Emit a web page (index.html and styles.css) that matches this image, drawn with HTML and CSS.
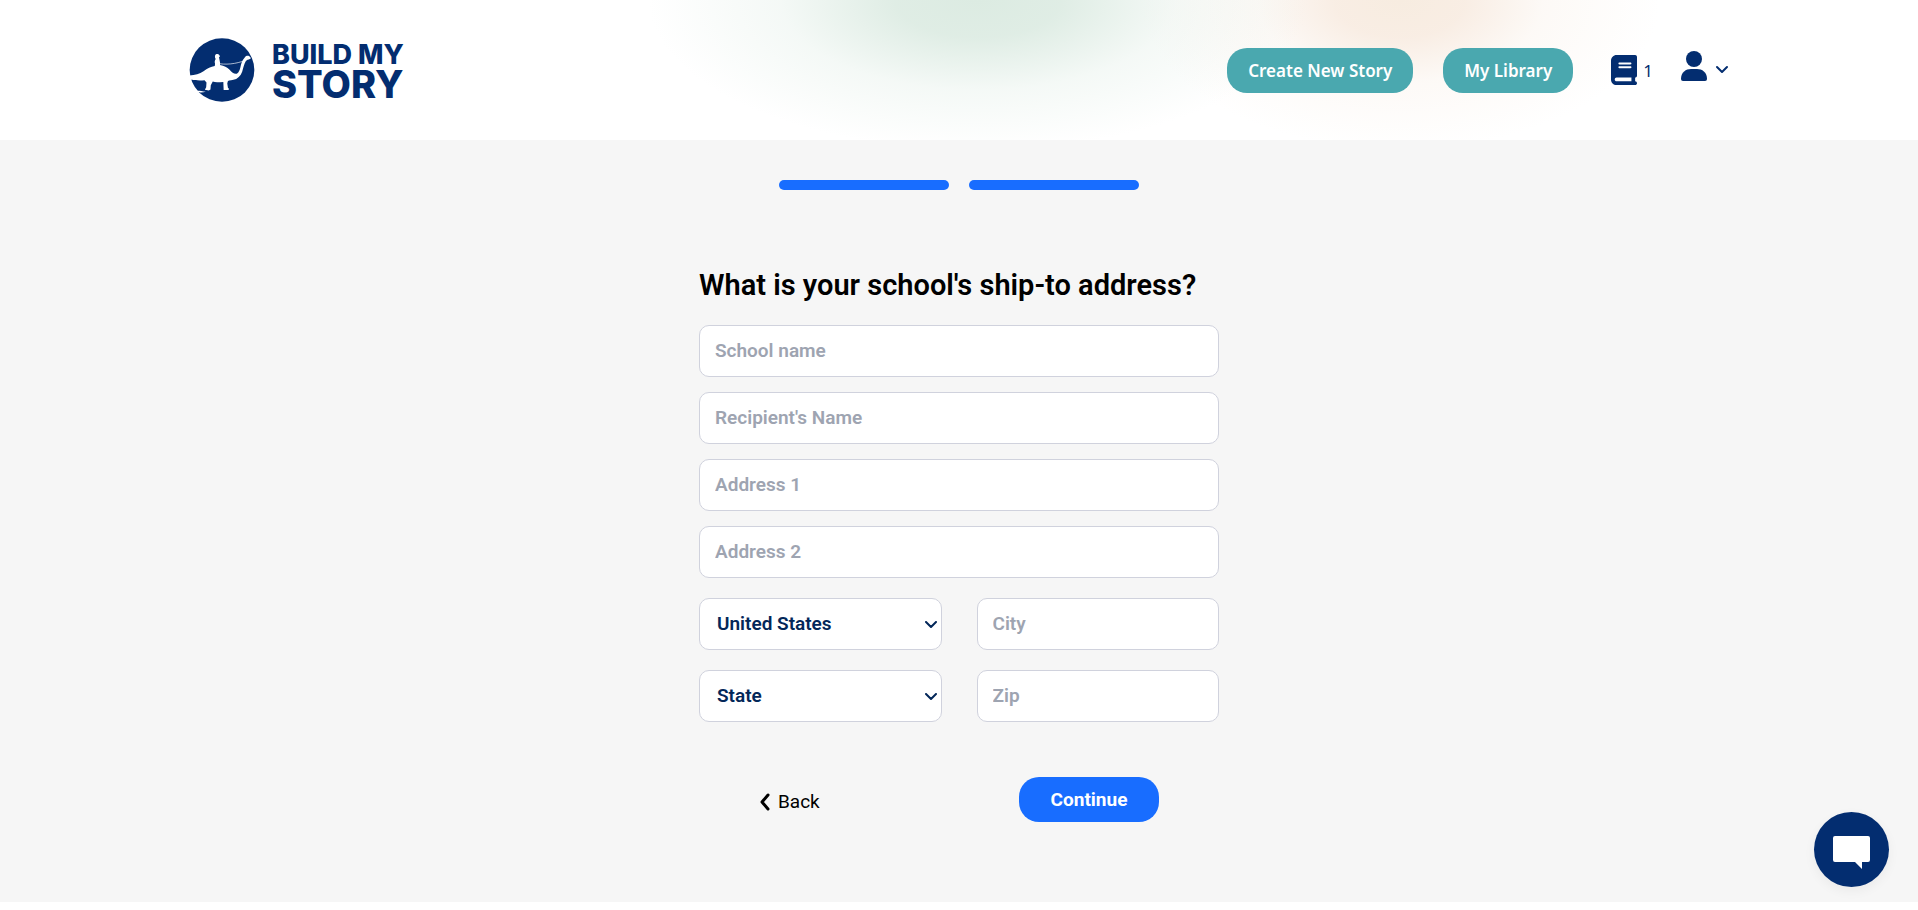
FILE: index.html
```
<!DOCTYPE html>
<html lang="en">
<head>
  <meta charset="UTF-8">
  <meta name="viewport" content="width=device-width, initial-scale=1.0">
  <title>Build My Story</title>
  <link rel="stylesheet" href="styles.css">
</head>
<body>

  <header class="header">
    <div class="header-inner">
      <a href="#" class="logo">
        <svg class="logo-mark" viewBox="27 23 198 194" aria-hidden="true">
          <ellipse cx="126" cy="120" rx="98" ry="96" fill="#032d70"/>
          <path fill="#fff" d="M27 137 C45 136 58 132 70 124 C82 114 92 110 104 108 L105 101 C103 96 104 91 107 87 C105 84 104 80 105 76 C107 71 115 70 118 75 L120 78 L117 81 L118 87 L120 97 L120 105 C133 107 141 112 149 119 C157 128 163 133 171 131 C178 127 180 119 182 111 C184 99 188 89 195 82 C197 77 204 75 209 78 L213 83 L212 87 L203 88 C196 93 193 104 190 115 C187 130 181 141 169 147 C157 151 148 151 144 153 L142 161 L144 174 L147 177 L146 181 L131 181 L130 156 C116 157 105 158 98 155 L92 166 L91 179 L86 182 L74 180 L78 172 L79 158 L73 151 C57 153 43 151 27 149 Z"/>
          <path fill="none" stroke="#fff" stroke-width="2" d="M119 101 C148 105 180 99 208 86"/>
          <path fill="#fff" d="M42 183 C54 182 64 183 77 186 C70 188 60 189 51 187 Z"/>
        </svg>
        <span class="logo-text">
          <span class="logo-top">BUILD MY</span>
          <span class="logo-bottom">STORY</span>
        </span>
      </a>

      <nav class="nav">
        <button type="button" class="nav-btn">Create New Story</button>
        <button type="button" class="nav-btn">My Library</button>
        <a href="#" class="books" aria-label="Books">
          <svg width="26" height="30" viewBox="0 0 448 512" preserveAspectRatio="none" fill="currentColor"><path d="M96 0C43 0 0 43 0 96V416c0 53 43 96 96 96H416c17.700 0 32-14.300 32-32s-14.300-32-32-32V384c17.700 0 32-14.300 32-32V32c0-17.700-14.300-32-32-32H96zm0 384H352v64H96c-17.700 0-32-14.300-32-32s14.300-32 32-32zm32-240c0-8.800 7.200-16 16-16H336c8.800 0 16 7.200 16 16s-7.200 16-16 16H144c-8.800 0-16-7.200-16-16zm16 48H336c8.800 0 16 7.200 16 16s-7.200 16-16 16H144c-8.800 0-16-7.200-16-16s7.200-16 16-16z"/></svg>
          <span>1</span>
        </a>
        <button type="button" class="account" aria-label="Account">
          <svg width="26" height="30" viewBox="0 0 26 30" fill="currentColor"><circle cx="13" cy="8" r="8"/><path d="M0 28 C0 21 5 18 10 18 H16 C21 18 26 21 26 28 Q26 30 24 30 H2 Q0 30 0 28Z"/></svg>
          <svg width="14" height="16" viewBox="0 0 14 16" fill="none" stroke="currentColor" stroke-width="2" stroke-linecap="round" stroke-linejoin="round"><path d="M2 9 L7 14 L12 9"/></svg>
        </button>
      </nav>
    </div>
  </header>

  <main class="main">
    <div class="steps">
      <span class="step"></span>
      <span class="step"></span>
    </div>

    <form class="form">
      <h1>What is your school's ship-to address?</h1>
      <input class="field" type="text" placeholder="School name" aria-label="School name">
      <input class="field" type="text" placeholder="Recipient's Name" aria-label="Recipient's Name">
      <input class="field" type="text" placeholder="Address 1" aria-label="Address 1">
      <input class="field" type="text" placeholder="Address 2" aria-label="Address 2">

      <div class="pairs">
        <div class="select-wrap">
          <select class="field" aria-label="Country">
            <option>United States</option>
          </select>
          <svg class="caret" width="12" height="8" viewBox="0 0 12 8"><path d="M1 1 L6 6 L11 1"/></svg>
        </div>
        <input class="field" type="text" placeholder="City" aria-label="City">
        <div class="select-wrap">
          <select class="field" aria-label="State">
            <option>State</option>
          </select>
          <svg class="caret" width="12" height="8" viewBox="0 0 12 8"><path d="M1 1 L6 6 L11 1"/></svg>
        </div>
        <input class="field" type="text" placeholder="Zip" aria-label="Zip">
      </div>

      <div class="actions">
        <a href="#" class="back">
          <svg width="10" height="18" viewBox="0 0 10 18" fill="none" stroke="currentColor" stroke-width="3" stroke-linecap="round" stroke-linejoin="round"><path d="M8 2 L2 9 L8 16"/></svg>
          Back
        </a>
        <button type="submit" class="continue">Continue</button>
      </div>
    </form>
  </main>

  <button type="button" class="chat" aria-label="Chat">
    <svg width="37" height="33" viewBox="0 0 37 33" fill="#fff"><path d="M2 0 H35 Q37 0 37 2 V24 Q37 26 35 26 H29 V33 L22 26 H2 Q0 26 0 24 V2 Q0 0 2 0Z"/></svg>
  </button>

</body>
</html>
```
FILE: styles.css
```
* {
  box-sizing: border-box;
}

body {
  margin: 0;
  background: #fff;
  font-family: Roboto, sans-serif;
  color: #000;
}

button {
  border: 0;
  padding: 0;
  background: none;
  font-family: inherit;
  cursor: pointer;
}

a {
  color: inherit;
  text-decoration: none;
}

/* header */
.header {
  height: 140px;
  padding: 0 24px;
  background:
    radial-gradient(ellipse 330px 150px at 51% 0, rgba(220, 235, 226, 1) 0%, rgba(220, 235, 226, 0.9) 25%, rgba(220, 235, 226, 0.3) 60%, rgba(220, 235, 226, 0) 100%),
    radial-gradient(ellipse 260px 150px at 73% 0, rgba(247, 236, 224, 1) 0%, rgba(247, 233, 221, 0.8) 25%, rgba(247, 233, 221, 0.25) 55%, rgba(247, 233, 221, 0) 100%),
    #fff;
}

.header-inner {
  display: flex;
  align-items: center;
  justify-content: space-between;
  height: 100%;
  max-width: 1540px;
  margin: 0 auto;
}

.logo {
  display: flex;
  align-items: center;
  gap: 17px;
  color: #032d70;
}

.logo-mark {
  width: 66px;
  height: 64px;
}

.logo-text {
  display: flex;
  flex-direction: column;
  font-family: Inter, sans-serif;
  font-weight: 800;
}

.logo-top {
  font-size: 27px;
  line-height: 27px;
}

.logo-bottom {
  font-size: 38px;
  line-height: 32px;
}

.nav {
  display: flex;
  align-items: center;
  color: #032d70;
}

.nav-btn {
  height: 45px;
  margin-right: 30px;
  padding: 0 21px;
  border-radius: 20px;
  background: #4aa8af;
  color: #fff;
  font: 600 17px "Noto Sans", sans-serif;
}

.books {
  display: flex;
  align-items: center;
  gap: 6px;
  margin: 0 28px 0 8px;
  font: 17px "Noto Sans", sans-serif;
}

.account {
  display: flex;
  align-items: center;
  gap: 8px;
  padding-bottom: 8px;
  color: #032d70;
}

/* content */
.main {
  min-height: calc(100vh - 148px);
  padding: 40px 24px;
  background: #f6f6f6;
}

.steps {
  display: flex;
  justify-content: center;
  gap: 20px;
}

.step {
  width: 170px;
  height: 10px;
  border-radius: 5px;
  background: #186dff;
}

.form {
  display: flex;
  flex-direction: column;
  gap: 15px;
  max-width: 520px;
  margin: 75px auto 0;
}

h1 {
  margin: 0 0 5px;
  font-size: 29px;
  line-height: 40px;
  font-weight: 600;
}

.field {
  width: 100%;
  height: 52px;
  padding: 0 15px 2px;
  border: 1px solid #d0d2dd;
  border-radius: 10px;
  background: #fff;
  color: #032759;
  font-family: inherit;
  font-size: 19px;
  font-weight: 600;
}

.field::placeholder {
  color: #9ea4b1;
  opacity: 1;
}

.pairs {
  display: grid;
  grid-template-columns: 1fr 1fr;
  gap: 20px 35px;
  margin-top: 5px;
}

.select-wrap {
  position: relative;
}

select.field {
  padding: 0 17px 2px;
  appearance: none;
}

.caret {
  position: absolute;
  top: 23px;
  right: 5px;
  fill: none;
  stroke: #032759;
  stroke-width: 2;
  stroke-linecap: round;
  stroke-linejoin: round;
  pointer-events: none;
}

.actions {
  display: grid;
  grid-template-columns: 1fr 1fr;
  align-items: center;
  margin-top: 40px;
}

.back {
  display: flex;
  align-items: center;
  gap: 8px;
  padding: 4px 0 0 61px;
  font-size: 19px;
}

.continue {
  justify-self: center;
  width: 140px;
  height: 45px;
  border-radius: 20px;
  background: #186dff;
  color: #fff;
  font-size: 19px;
  font-weight: 700;
}

/* chat bubble */
.chat {
  position: fixed;
  right: 29px;
  bottom: 23px;
  display: flex;
  align-items: center;
  justify-content: center;
  width: 75px;
  height: 75px;
  padding-top: 5px;
  border-radius: 50%;
  background: #032d70;
  box-shadow: 0 4px 12px rgba(0, 0, 0, 0.05);
}
```
